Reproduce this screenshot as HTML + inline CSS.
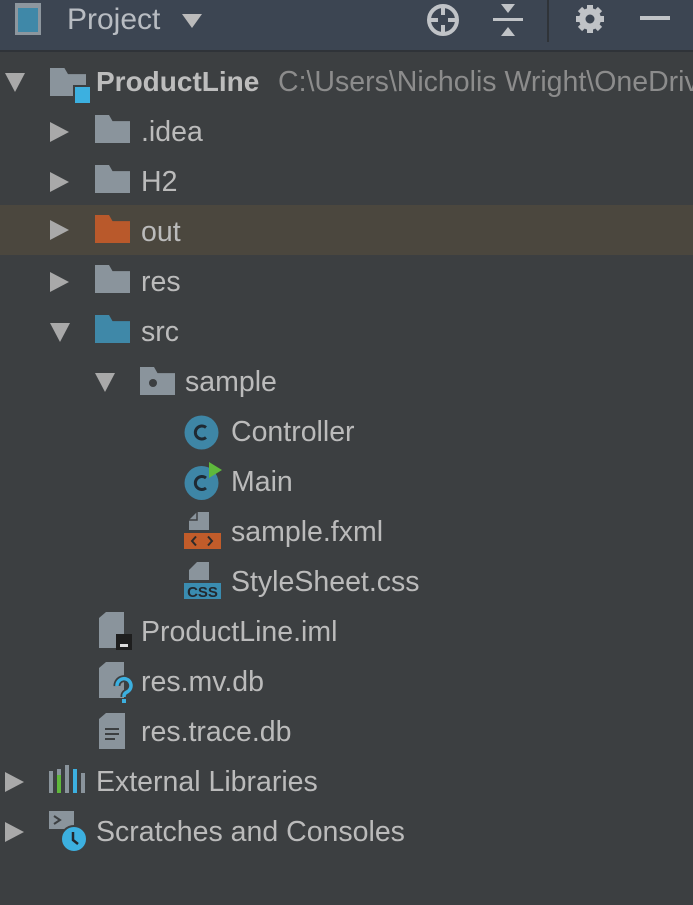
<!DOCTYPE html>
<html><head><style>
body{margin:0;width:693px;height:905px;background:#3c3f41;overflow:hidden;font-family:"Liberation Sans",sans-serif;color:#bbbbbb;position:relative}
.hdr{position:absolute;left:0;top:0;width:693px;height:50px;background:#3c4552;border-bottom:2px solid #2f3338}
.row{position:absolute;left:0;width:693px;height:50px;line-height:50px;font-size:28.5px;white-space:nowrap}
.row span.t{position:absolute}
.ar{position:absolute;width:0;height:0}
.ar.r{border-top:10px solid transparent;border-bottom:10px solid transparent;border-left:19px solid #a9a9a9;top:15px}
.ar.d{border-left:10px solid transparent;border-right:10px solid transparent;border-top:19px solid #a9a9a9;top:16px}
.ic{position:absolute}
</style></head><body>
<div class="hdr">
 <div style="position:absolute;left:15px;top:3px;width:26px;height:32px;border:3px solid #8d969e;border-top-width:5px;box-sizing:border-box;background:#3f88a8"></div>
 <div style="position:absolute;left:67px;top:0;line-height:40px;font-size:30px;color:#b8bcc2">Project</div>
 <div class="ar" style="left:182px;top:14px;border-left:10px solid transparent;border-right:10px solid transparent;border-top:14px solid #bbb"></div>
 <svg style="position:absolute;left:423px;top:2px" width="40" height="36" viewBox="0 0 40 36"><circle cx="20" cy="18" r="14" fill="none" stroke="#c0c3c7" stroke-width="4"/><path d="M20 4v9M20 23v9M6 18h9M25 18h9" stroke="#c0c3c7" stroke-width="4"/></svg>
 <svg style="position:absolute;left:490px;top:2px" width="36" height="36" viewBox="0 0 36 36"><path d="M11 2h14l-7 9z M11 34h14l-7-9z" fill="#c0c3c7"/><rect x="3" y="16" width="30" height="3" fill="#c0c3c7"/></svg>
 <div style="position:absolute;left:547px;top:0;width:2px;height:42px;background:#2f3338"></div>
 <svg style="position:absolute;left:571px;top:1px" width="38" height="36" viewBox="0 0 38 36"><g fill="#c0c3c7"><circle cx="19" cy="18" r="11"/><g stroke="#c0c3c7" stroke-width="6"><path d="M19 4v28M5 18h28M9 8l20 20M29 8l-20 20"/></g></g><circle cx="19" cy="18" r="4.5" fill="#3c4552"/></svg>
 <div style="position:absolute;left:640px;top:16px;width:30px;height:4px;background:#c0c3c7"></div>
</div>

<div class="row" style="top:57px">
 <div class="ar d" style="left:5px"></div>
 <div class="ic" style="left:50px;top:11px;width:36px;height:28px;background:#8a949c;clip-path:polygon(0 0,40% 0,50% 22%,100% 22%,100% 100%,0 100%)"></div>
 <div class="ic" style="left:73px;top:28px;width:15px;height:16px;background:#3cb0e0;border-top:2px solid #3c3f41;border-left:2px solid #3c3f41"></div>
 <span class="t" style="left:96px;font-weight:bold;color:#bdbdbd;font-size:28px">ProductLine</span>
 <span class="t" style="left:278px;color:#8c8c8c">C:\Users\Nicholis Wright\OneDrive</span>
</div>

<div class="row" style="top:107px"><div class="ar r" style="left:50px"></div><div class="ic" style="left:95px;top:8px;width:35px;height:28px;background:#8a949c;clip-path:polygon(0 0,40% 0,50% 22%,100% 22%,100% 100%,0 100%)"></div><span class="t" style="left:141px">.idea</span></div>
<div class="row" style="top:157px"><div class="ar r" style="left:50px"></div><div class="ic" style="left:95px;top:8px;width:35px;height:28px;background:#8a949c;clip-path:polygon(0 0,40% 0,50% 22%,100% 22%,100% 100%,0 100%)"></div><span class="t" style="left:141px">H2</span></div>
<div class="row" style="top:205px;background:#4b473e"><div class="ar r" style="left:50px"></div><div class="ic" style="left:95px;top:10px;width:35px;height:28px;background:#b9592b;clip-path:polygon(0 0,40% 0,50% 22%,100% 22%,100% 100%,0 100%)"></div><span class="t" style="left:141px;top:2px">out</span></div>
<div class="row" style="top:257px"><div class="ar r" style="left:50px"></div><div class="ic" style="left:95px;top:8px;width:35px;height:28px;background:#8a949c;clip-path:polygon(0 0,40% 0,50% 22%,100% 22%,100% 100%,0 100%)"></div><span class="t" style="left:141px">res</span></div>
<div class="row" style="top:307px"><div class="ar d" style="left:50px"></div><div class="ic" style="left:95px;top:8px;width:35px;height:28px;background:#3f88a8;clip-path:polygon(0 0,40% 0,50% 22%,100% 22%,100% 100%,0 100%)"></div><span class="t" style="left:141px">src</span></div>

<div class="row" style="top:357px"><div class="ar d" style="left:95px"></div><div class="ic" style="left:140px;top:10px;width:35px;height:28px;background:#8a949c;clip-path:polygon(0 0,40% 0,50% 22%,100% 22%,100% 100%,0 100%)"></div><div class="ic" style="left:149px;top:22px;width:8px;height:8px;border-radius:50%;background:#3c3f41"></div><span class="t" style="left:185px">sample</span></div>

<div class="row" style="top:407px"><svg class="ic" style="left:184px;top:8px" width="36" height="36" viewBox="0 0 36 36"><circle cx="17.5" cy="17.5" r="17" fill="#3e86a6"/><path d="M22 12.5a6.5 6.5 0 1 0 0 10" stroke="#1f2a33" stroke-width="3" fill="none"/></svg><span class="t" style="left:231px">Controller</span></div>
<div class="row" style="top:457px"><svg class="ic" style="left:184px;top:4px" width="40" height="40" viewBox="0 0 40 40"><circle cx="17.5" cy="22" r="17" fill="#3e86a6"/><path d="M22 17a6.5 6.5 0 1 0 0 10" stroke="#1f2a33" stroke-width="3" fill="none"/><path d="M25 1l13 8-13 8z" fill="#5fb83c"/></svg><span class="t" style="left:231px">Main</span></div>
<div class="row" style="top:507px"><svg class="ic" style="left:184px;top:5px" width="38" height="40" viewBox="0 0 38 40"><path d="M5 0h20v18H5v-12z" fill="#8a949c"/><path d="M5 0h8l-8 8z" fill="#3c3f41"/><path d="M5 8h8V0" stroke="#3c3f41" stroke-width="1.5" fill="none"/><rect x="0" y="21" width="37" height="16" fill="#c15c2a"/><path d="M12 24.5l-4 4.5 4 4.5M24 24.5l4 4.5-4 4.5" stroke="#2b2b2b" stroke-width="2" fill="none"/></svg><span class="t" style="left:231px">sample.fxml</span></div>
<div class="row" style="top:557px"><svg class="ic" style="left:184px;top:5px" width="38" height="40" viewBox="0 0 38 40"><path d="M5 0h20v18H5z" fill="#8a949c"/><path d="M5 0h8l-8 8z" fill="#3c3f41"/><rect x="0" y="21" width="37" height="16" fill="#3a8cb0"/><text x="18.5" y="35" font-size="15" font-weight="bold" text-anchor="middle" fill="#23282e" font-family="Liberation Sans">CSS</text></svg><span class="t" style="left:231px">StyleSheet.css</span></div>

<div class="row" style="top:607px"><svg class="ic" style="left:99px;top:5px" width="34" height="40" viewBox="0 0 34 40"><path d="M0 6l7-6h18v36H0z" fill="#8a949c"/><rect x="17" y="22" width="16" height="16" fill="#1e1e1e"/><rect x="21" y="32" width="8" height="3" fill="#ddd"/></svg><span class="t" style="left:141px">ProductLine.iml</span></div>
<div class="row" style="top:657px"><svg class="ic" style="left:99px;top:5px" width="34" height="42" viewBox="0 0 34 42"><path d="M0 6l7-6h18v36H0z" fill="#8a949c"/><path d="M18 24a7 7 0 1 1 10 6c-2 1-3 2-3 4v1" stroke="#3c3f41" stroke-width="7" fill="none"/><path d="M18 24a7 7 0 1 1 10 6c-2 1-3 2-3 4v1" stroke="#3cb0e0" stroke-width="3.5" fill="none"/><rect x="23" y="37" width="4" height="4" fill="#3cb0e0"/></svg><span class="t" style="left:141px">res.mv.db</span></div>
<div class="row" style="top:707px"><svg class="ic" style="left:99px;top:6px" width="28" height="38" viewBox="0 0 28 38"><path d="M0 6l7-6h19v36H0z" fill="#8a949c"/><path d="M6 16h14M6 21h14M6 26h10" stroke="#3c3f41" stroke-width="2"/></svg><span class="t" style="left:141px">res.trace.db</span></div>

<div class="row" style="top:757px"><div class="ar r" style="left:5px"></div><svg class="ic" style="left:49px;top:6px" width="36" height="32" viewBox="0 0 36 32"><rect x="0" y="8" width="4" height="22" fill="#8a949c"/><rect x="8" y="6" width="4" height="24" fill="#8a949c"/><rect x="8" y="12" width="4" height="18" fill="#5fb83c"/><rect x="16" y="2" width="4" height="28" fill="#8a949c"/><rect x="24" y="6" width="4" height="24" fill="#3cb0e0"/><rect x="32" y="10" width="4" height="20" fill="#8a949c"/></svg><span class="t" style="left:96px">External Libraries</span></div>
<div class="row" style="top:807px"><div class="ar r" style="left:5px"></div><svg class="ic" style="left:49px;top:4px" width="40" height="42" viewBox="0 0 40 42"><path d="M0 0h25v18H0z" fill="#8a949c"/><path d="M5 5l6 4-6 4" stroke="#3c3f41" stroke-width="2" fill="none"/><circle cx="25" cy="28" r="13" fill="#3cb0e0" stroke="#3c3f41" stroke-width="2"/><path d="M24 21v8l5 4" stroke="#23282e" stroke-width="2.5" fill="none"/></svg><span class="t" style="left:96px">Scratches and Consoles</span></div>
</body></html>
